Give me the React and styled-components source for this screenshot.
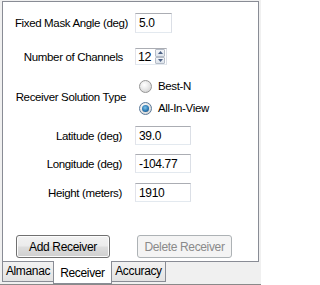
import React from 'react';
import styled, { createGlobalStyle } from 'styled-components';

const GlobalStyle = createGlobalStyle`
  html, body {
    margin: 0;
    padding: 0;
    background: #ffffff;
  }
  * {
    box-sizing: border-box;
  }
`;

const Window = styled.div`
  width: 261px;
  height: 285px;
  padding: 1px 0 0 2px;
  background: #f0f0f0;
  border-bottom: 1px solid #8a8a8a;
  font-family: 'Liberation Sans', Arial, sans-serif;
  font-size: 11.5px;
  letter-spacing: -0.35px;
  color: #000;
  display: flex;
  flex-direction: column;
`;

const Panel = styled.div`
  width: 257px;
  height: 262px;
  background: #ffffff;
  border: 1px solid #898c95;
  display: flex;
  flex-direction: column;
  padding-bottom: 3px;
`;

const Row = styled.div`
  display: flex;
  align-items: center;
  margin-top: ${(p) => p.$top}px;
`;

const Label = styled.div`
  width: 132px;
  flex: none;
  text-align: right;
  padding-right: ${(p) => p.$inset}px;
  white-space: nowrap;
`;

const TextBox = styled.div`
  width: ${(p) => p.$width}px;
  height: ${(p) => p.$height}px;
  border: 1px solid #abadb3;
  border-left-color: #e2e3ea;
  border-right-color: #dbdfe6;
  border-bottom-color: #e3e9ef;
  padding: 0 3px;
  display: flex;
  align-items: center;
  background: #fff;
  font-size: 12px;
`;

const Spinner = styled.div`
  width: 32px;
  height: 17px;
  border: 1px solid #abadb3;
  border-left-color: #e2e3ea;
  border-right-color: #dbdfe6;
  border-bottom-color: #e3e9ef;
  display: flex;
  background: #fff;
`;

const SpinValue = styled.div`
  flex: 1;
  padding-left: 2px;
  display: flex;
  align-items: center;
  font-size: 12.5px;
`;

const SpinButtons = styled.div`
  width: 10px;
  display: flex;
  flex-direction: column;
  margin: 0 1px 0 0;
`;

const SpinButton = styled.div`
  flex: 1;
  border: 1px solid #b5bcc7;
  border-radius: 1px;
  background: linear-gradient(#f3f5f8, #dde4ec);
  display: flex;
  align-items: center;
  justify-content: center;
`;

const RadioGroup = styled.div`
  display: flex;
  flex-direction: column;
  gap: 6px;
  padding-left: 4px;
`;

const RadioItem = styled.label`
  display: flex;
  align-items: center;
  gap: 6px;
  height: 16px;
`;

const RadioCircle = styled.span`
  width: 13px;
  height: 13px;
  border-radius: 50%;
  border: 1px solid ${(p) => (p.$checked ? '#5b7a99' : '#959595')};
  background: radial-gradient(circle at 40% 35%, #ffffff 0%, #e9e9e9 45%, #c9c9c9 100%);
  display: flex;
  align-items: center;
  justify-content: center;
`;

const RadioDot = styled.span`
  width: 7px;
  height: 7px;
  border-radius: 50%;
  background: radial-gradient(circle at 45% 40%, #7fc3e8 0%, #2a78b3 55%, #0e3e66 100%);
`;

const ButtonRow = styled.div`
  margin-top: auto;
  display: flex;
  padding-left: 13px;
  gap: 27px;
`;

const Button = styled.div`
  width: ${(p) => p.$width}px;
  height: 23px;
  border-radius: 3px;
  display: flex;
  align-items: center;
  justify-content: center;
  font-size: 12px;
  color: ${(p) => (p.$disabled ? '#8a8a8a' : '#000')};
  border: 1px solid ${(p) => (p.$disabled ? '#adb2b5' : '#707070')};
  background: ${(p) =>
    p.$disabled
      ? '#f4f4f4'
      : 'linear-gradient(#f2f2f2 0%, #ebebeb 48%, #dddddd 52%, #cfcfcf 100%)'};
  box-shadow: ${(p) => (p.$disabled ? 'none' : 'inset 0 0 0 1px #fcfcfc')};
`;

const TabStrip = styled.div`
  display: flex;
  align-items: flex-start;
  margin-top: -1px;
`;

const Tab = styled.div`
  width: ${(p) => p.$width}px;
  height: ${(p) => (p.$active ? 23 : 20)}px;
  margin-top: ${(p) => (p.$active ? 0 : 1)}px;
  margin-left: -1px;
  border: 1px solid #898c95;
  border-top: none;
  background: ${(p) => (p.$active ? '#ffffff' : 'linear-gradient(#f2f2f2, #e3e3e3)')};
  position: relative;
  z-index: ${(p) => (p.$active ? 1 : 0)};
  display: flex;
  align-items: ${(p) => (p.$active ? 'flex-end' : 'center')};
  justify-content: center;
  padding-bottom: ${(p) => (p.$active ? 3 : 1)}px;
  font-size: 12px;

  &:first-child {
    margin-left: 0;
  }
`;

function Arrow({ up }) {
  return (
    <svg width="5" height="3" viewBox="0 0 5 3">
      <path d={up ? 'M0 3 L2.5 0 L5 3 Z' : 'M0 0 L2.5 3 L5 0 Z'} fill="#4d6185" />
    </svg>
  );
}

function Radio({ checked, children }) {
  return (
    <RadioItem>
      <RadioCircle $checked={checked}>{checked && <RadioDot />}</RadioCircle>
      {children}
    </RadioItem>
  );
}

export default function App() {
  return (
    <>
      <GlobalStyle />
      <Window>
        <Panel>
          <Row $top={11}>
            <Label $inset={7}>Fixed Mask Angle (deg)</Label>
            <TextBox $width={37} $height={20}>5.0</TextBox>
          </Row>
          <Row $top={15}>
            <Label $inset={12}>Number of Channels</Label>
            <Spinner>
              <SpinValue>12</SpinValue>
              <SpinButtons>
                <SpinButton>
                  <Arrow up />
                </SpinButton>
                <SpinButton>
                  <Arrow />
                </SpinButton>
              </SpinButtons>
            </Spinner>
          </Row>
          <Row $top={13}>
            <Label $inset={9}>Receiver Solution Type</Label>
            <RadioGroup>
              <Radio>Best-N</Radio>
              <Radio checked>All-In-View</Radio>
            </RadioGroup>
          </Row>
          <Row $top={10}>
            <Label $inset={13}>Latitude (deg)</Label>
            <TextBox $width={56} $height={19}>39.0</TextBox>
          </Row>
          <Row $top={9}>
            <Label $inset={13}>Longitude (deg)</Label>
            <TextBox $width={56} $height={19}>-104.77</TextBox>
          </Row>
          <Row $top={10}>
            <Label $inset={13}>Height (meters)</Label>
            <TextBox $width={56} $height={19}>1910</TextBox>
          </Row>
          <ButtonRow>
            <Button $width={94}>Add Receiver</Button>
            <Button $width={95} $disabled>
              Delete Receiver
            </Button>
          </ButtonRow>
        </Panel>
        <TabStrip>
          <Tab $width={52}>Almanac</Tab>
          <Tab $width={59} $active>
            Receiver
          </Tab>
          <Tab $width={55}>Accuracy</Tab>
        </TabStrip>
      </Window>
    </>
  );
}
